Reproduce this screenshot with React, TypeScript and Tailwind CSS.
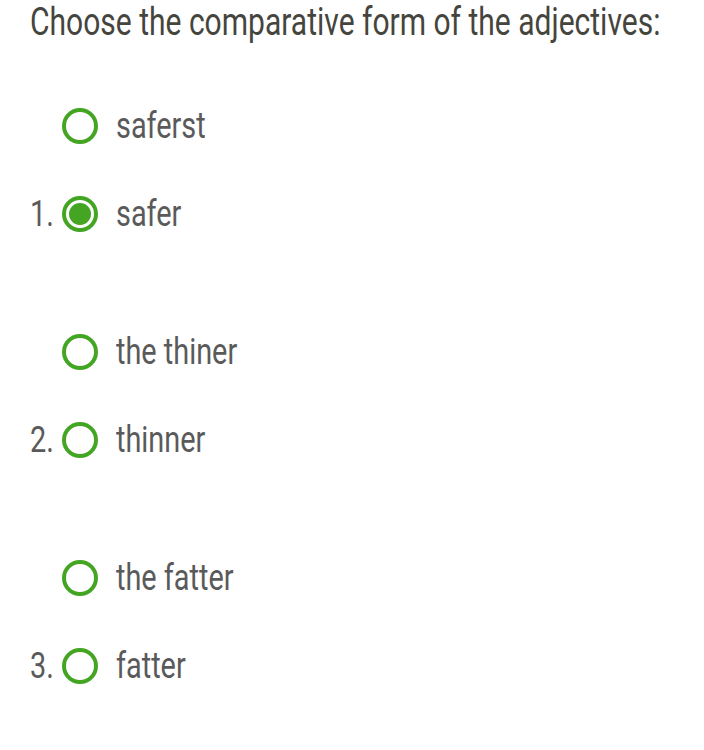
import { useState } from "react";

type Question = {
  options: string[];
};

const questions: Question[] = [
  { options: ["saferst", "safer"] },
  { options: ["the thiner", "thinner"] },
  { options: ["the fatter", "fatter"] },
];

function Radio({ checked }: { checked: boolean }) {
  return (
    <span className="flex h-[36px] w-[36px] shrink-0 items-center justify-center rounded-full border-[4px] border-[#44a523] bg-white">
      {checked && <span className="h-[22px] w-[22px] rounded-full bg-[#44a523]" />}
    </span>
  );
}

export default function App() {
  const [answers, setAnswers] = useState<Record<number, number>>({ 0: 1 });

  return (
    <div className="min-h-screen bg-white pl-[30px] font-['Roboto',sans-serif] text-[#4a4a44]">
      <h1 className="origin-left scale-x-[0.79] whitespace-nowrap text-[38px] leading-[44px] text-[#45453e]">
        Choose the comparative form of the adjectives:
      </h1>

      <div className="mt-[62px] flex flex-col gap-[98px]">
        {questions.map((q, qi) => (
          <div key={qi} className="flex flex-col gap-[48px]">
            {q.options.map((opt, oi) => (
              <label
                key={opt}
                className="flex h-[40px] cursor-pointer items-center"
                onClick={() => setAnswers({ ...answers, [qi]: oi })}
              >
                <span className="w-[32px] shrink-0 origin-left scale-x-[0.78] text-[37px] leading-[40px] text-[#5a5a5a]">
                  {oi === q.options.length - 1 ? `${qi + 1}.` : ""}
                </span>
                <Radio checked={answers[qi] === oi} />
                <span className="ml-[18px] origin-left scale-x-[0.78] whitespace-nowrap text-[37px] leading-[40px] text-[#5a5a5a]">
                  {opt}
                </span>
              </label>
            ))}
          </div>
        ))}
      </div>
    </div>
  );
}
